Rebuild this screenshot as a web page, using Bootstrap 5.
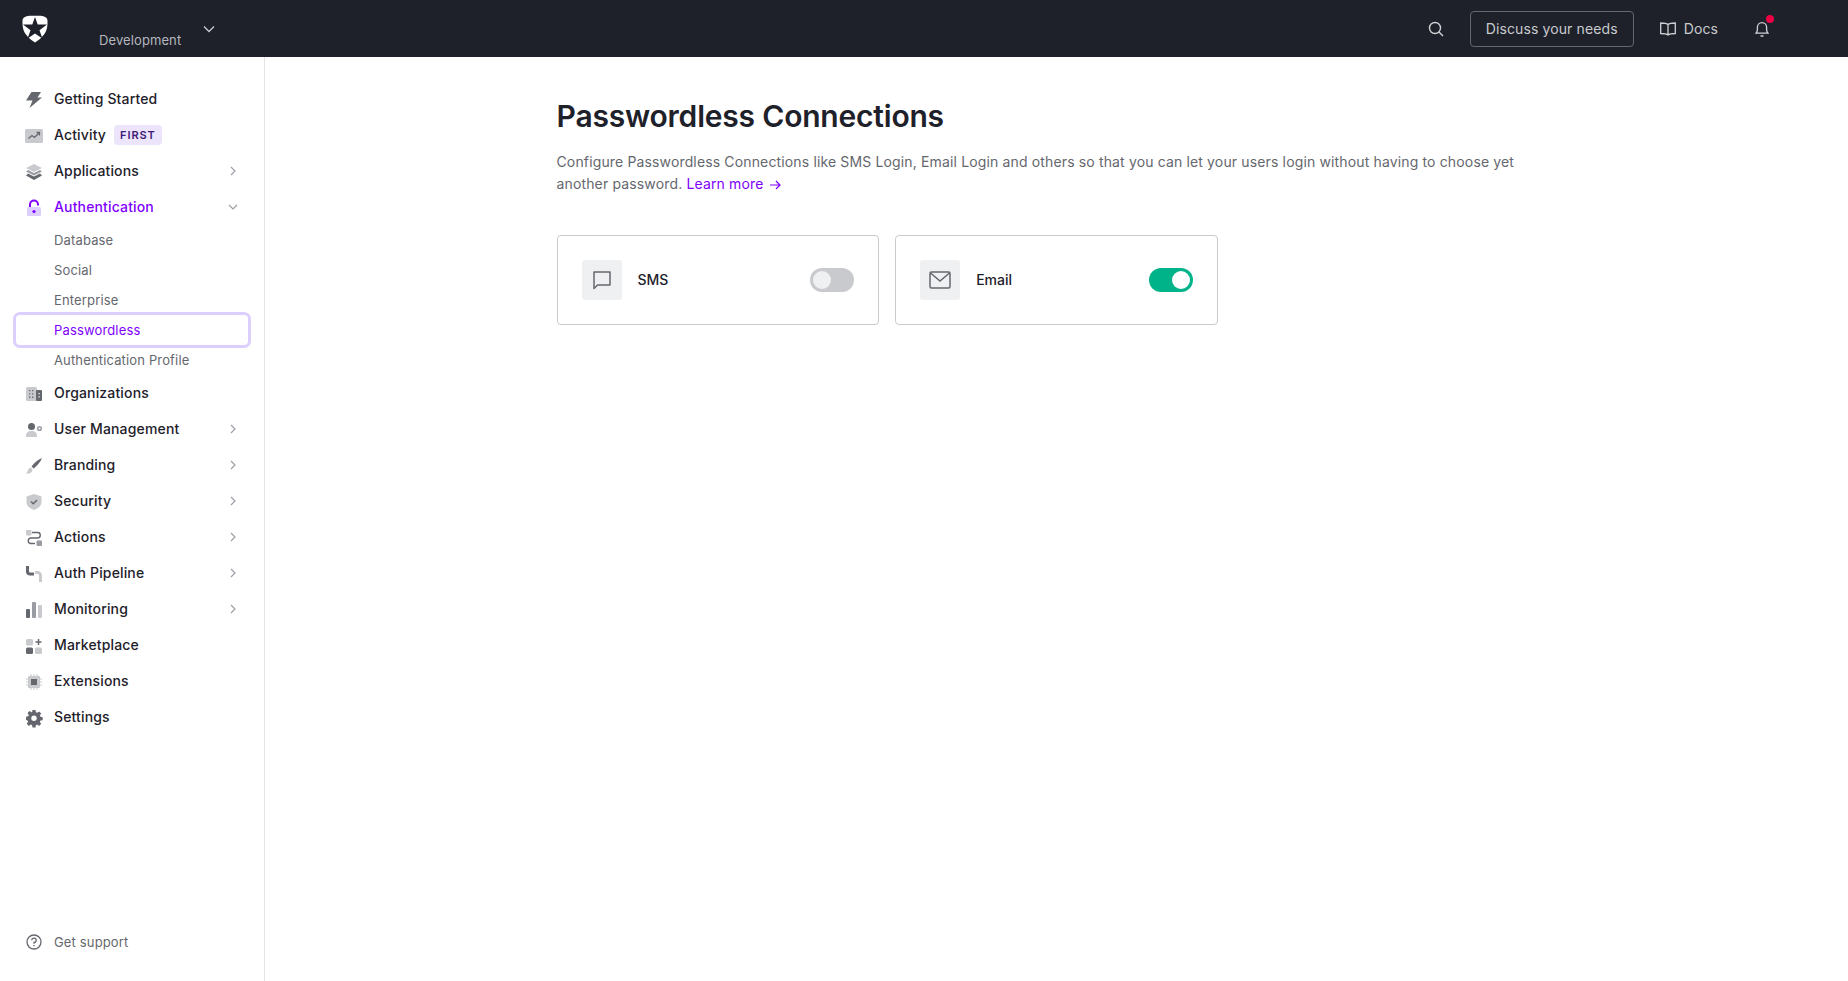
<!DOCTYPE html>
<html lang="en">
  <head>
    <meta charset="UTF-8" />
    <meta name="viewport" content="width=device-width, initial-scale=1.0" />
    <title>Passwordless Connections</title>
    <link href="https://cdn.jsdelivr.net/npm/bootstrap@5.3.3/dist/css/bootstrap.min.css" rel="stylesheet" />
    <style>
      html, body { height: 100%; }
      body {
        margin: 0;
        background: #fff;
        color: #1e212a;
        font-family: "Inter", "Liberation Sans", sans-serif;
        font-size: 14px;
        overflow: hidden;
      }
      .top-bar {
        height: 57px;
        background: #1e212a;
        padding: 0;
        color: #d0d1d5;
      }
      .brand-box { width: 265px; height: 57px; position: relative; padding-left: 22px; }
      .brand-logo { margin-top: 15px; display: block; flex: none; }
      .tenant-name { font-size: 13px; color: #b5b7be; margin: 32px 0 0 51px; line-height: 16px; letter-spacing: .1px; }
      .tenant-caret { margin: 25px 0 0 22px; }
      .top-actions { padding-right: 79px; }
      .search-link { margin-right: 26px; line-height: 0; }
      .discuss-btn {
        width: 164px;
        height: 36px;
        padding: 0;
        font-size: 14px;
        color: #c9cace;
        border: 1px solid #65676e;
        border-radius: 4px;
        letter-spacing: .12px;
      }
      .docs-link { margin-left: 26px; color: #c9cace; font-size: 14px; text-decoration: none; letter-spacing: .1px; }
      .bell-link { margin-left: 37px; position: relative; line-height: 0; }
      .bell-dot {
        position: absolute;
        top: -6px;
        right: -5px;
        width: 8px;
        height: 8px;
        border-radius: 50%;
        background: #eb0044;
      }
      .page-body { height: calc(100vh - 57px); }
      .side-nav {
        width: 265px;
        flex: none;
        border-right: 1px solid #e3e4e6;
        padding: 24px 14px 20px;
      }
      .nav-entry {
        height: 36px;
        padding: 0 14px 2px 12px;
        color: #1e212a;
        font-weight: 500;
        font-size: 14px;
        text-decoration: none;
        letter-spacing: .15px;
      }
      .nav-entry.is-open { color: #8000ff; }
      .nav-icon { width: 16px; height: 16px; margin: 3px 12px 0 0; flex: none; display: block; overflow: visible; }
      .nav-icon-wide { width: 18px; height: 16px; margin: 3px 11px 0 -1px; }
      .nav-chevron { margin: 2px 0 0 auto; flex: none; }
      .nav-chevron-down { margin-right: -2px; }
      .first-tag {
        margin: 2px 0 0 8px;
        background: #ece4fb;
        color: #3f1a78;
        font-size: 11px;
        font-weight: 600;
        letter-spacing: .9px;
        height: 20px;
        line-height: 20px;
        padding: 0 6px;
        border-radius: 4px;
      }
      .sub-entry {
        height: 30px;
        line-height: 30px;
        padding-left: 40px;
        color: #65676e;
        font-size: 13px;
        text-decoration: none;
        letter-spacing: .15px;
      }
      .sub-entry.is-current {
        color: #8000ff;
        margin: -3px -1px;
        height: 36px;
        line-height: 30px;
        padding-left: 38px;
        border: 3px solid #dccfff;
        border-radius: 7px;
        position: relative;
      }
      .support-entry { color: #65676e; font-weight: 400; font-size: 13px; margin-top: auto; padding-bottom: 0; }
      .support-entry .nav-icon { margin: 0 12px 2px 0; }
      .main-pane { flex: 1; min-width: 0; }
      .main-inner { width: 1000px; margin: 0 auto; padding-top: 37px; }
      .page-title { font-size: 30px; line-height: 44px; font-weight: 600; letter-spacing: -.2px; color: #1e212a; margin: 0 0 13px; }
      .page-intro { font-size: 14px; line-height: 22px; color: #65676e; margin: 0 0 40px; letter-spacing: .145px; }
      .page-intro a { color: #8000ff; text-decoration: none; }
      .learn-arrow { margin-left: 5px; }
      .conn-card {
        height: 90px;
        padding: 0 24px;
        border: 1px solid #c9cace;
        border-radius: 4px;
      }
      .conn-icon { width: 40px; height: 40px; background: #eff0f2; border-radius: 3px; flex: none; }
      .conn-name { margin: 0 0 1px 16px; font-weight: 500; font-size: 14px; }
      .conn-switch { margin: 0 0 0 auto; padding: 0; min-height: 0; line-height: 0; }
      .conn-switch .form-check-input {
        width: 44px;
        height: 24px;
        margin: 0;
        float: none;
        border: 0;
        background-color: #c9cace;
        background-image: url("data:image/svg+xml,%3csvg xmlns='http://www.w3.org/2000/svg' viewBox='-4 -4 8 8'%3e%3ccircle r='3' fill='%23eff0f2'/%3e%3c/svg%3e");
      }
      .conn-switch .form-check-input:checked {
        background-color: #00b388;
        background-image: url("data:image/svg+xml,%3csvg xmlns='http://www.w3.org/2000/svg' viewBox='-4 -4 8 8'%3e%3ccircle r='3' fill='%23fff'/%3e%3c/svg%3e");
      }
    </style>
  </head>
  <body>
    <nav class="navbar top-bar d-flex flex-nowrap align-items-stretch justify-content-between">
      <div class="brand-box d-flex align-items-start">
        <svg class="brand-logo" width="26" height="28" viewBox="0 0 26 28">
          <path fill="#fff" d="M18.500 .8H7.500L4.600 1.200C2.200 2 .6 3.300 .5 5.500c-.2 6.500 .8 10.500 3.500 14C6.300 22.800 9.500 25.500 13 27.500c3.500-2 6.700-4.700 9-8 2.700-3.500 3.700-7.500 3.500-14-.1-2.200-1.700-3.500-4.100-4.300Z"/>
          <path fill="#1e212a" d="M13 2l2.700 7.600H25l-7.500 5.600 2.900 8.300L13 18.500l-7.400 5 2.900-8.300L1 9.600h9.300Z"/>
        </svg>
        <div class="tenant-name">Development</div>
        <svg class="tenant-caret" width="12" height="8" viewBox="0 0 12 8"><path d="M1 1.500l5 5 5-5" fill="none" stroke="#c9cace" stroke-width="1.300"/></svg>
      </div>
      <div class="top-actions d-flex align-items-center">
        <a class="search-link" href="#">
          <svg width="16" height="16" viewBox="0 0 16 16" fill="none" stroke="#d0d1d5" stroke-width="1.400"><circle cx="7" cy="7" r="5.500"/><path d="M11 11l4 4"/></svg>
        </a>
        <button type="button" class="btn discuss-btn">Discuss your needs</button>
        <a class="docs-link d-flex align-items-center gap-2" href="#">
          <svg width="16" height="14" viewBox="0 0 16 14" fill="none" stroke="#d0d1d5" stroke-width="1.300"><path d="M8 2.500C6.500 1.200 3 1 .7 1v10.500c2.300 0 5.800.2 7.300 1.500 1.500-1.300 5-1.500 7.300-1.500V1C13 1 9.500 1.200 8 2.500ZM8 2.500V13"/></svg>
          Docs
        </a>
        <a class="bell-link" href="#">
          <svg width="14" height="16" viewBox="0 0 14 16" fill="none" stroke="#d0d1d5" stroke-width="1.300"><path d="M1 12.200c1-1 1.400-2 1.400-3.700V6.300a4.600 4.600 0 0 1 9.200 0v2.200c0 1.700.4 2.700 1.400 3.700ZM5.500 15h3"/></svg>
          <span class="bell-dot"></span>
        </a>
      </div>
    </nav>

    <div class="page-body d-flex">
      <aside class="side-nav d-flex flex-column">
        <a class="nav-entry d-flex align-items-center" href="#">
          <svg class="nav-icon" viewBox="0 0 16 16"><path fill="#65676e" d="M5.500 0H15l-3.500 5.500H16L3.500 16l3-7.500H0Z"/></svg>
          Getting Started
        </a>
        <a class="nav-entry d-flex align-items-center" href="#">
          <svg class="nav-icon nav-icon-wide" viewBox="0 0 18 16"><rect y="1" width="18" height="14" rx="1.500" fill="#c9cace"/><path d="M3.500 10.500l3.500-3 2.500 2 4.500-4.500M11.500 4.500h3v3" fill="none" stroke="#65676e" stroke-width="1.300"/></svg>
          Activity
          <span class="first-tag">FIRST</span>
        </a>
        <a class="nav-entry d-flex align-items-center" href="#">
          <svg class="nav-icon" viewBox="0 0 16 16"><path fill="#c9cace" d="M8 0l8 4-8 4-8-4Z"/><path fill="#9a9ca3" d="M8 9L2 6 0 7.500l8 4 8-4L14 6Z"/><path fill="#65676e" d="M8 12.500 2 9.500l-2 2 8 4.500 8-4.500-2-2Z"/></svg>
          Applications
          <svg class="nav-chevron" width="6" height="10" viewBox="0 0 6 10"><path d="M1 1l4 4-4 4" fill="none" stroke="#9a9ca3" stroke-width="1.100"/></svg>
        </a>
        <a class="nav-entry is-open d-flex align-items-center" href="#">
          <svg class="nav-icon" viewBox="0 0 16 16"><rect x="1" y="7" width="14" height="9" rx="1.500" fill="#dccfff"/><path d="M4 7V4.500a4 4 0 0 1 8 0V5.500" fill="none" stroke="#8000ff" stroke-width="2"/><circle cx="8" cy="11.500" r="1.600" fill="#8000ff"/></svg>
          Authentication
          <svg class="nav-chevron nav-chevron-down" width="10" height="6" viewBox="0 0 10 6"><path d="M1 1l4 4 4-4" fill="none" stroke="#9a9ca3" stroke-width="1.100"/></svg>
        </a>
        <a class="sub-entry" href="#">Database</a>
        <a class="sub-entry" href="#">Social</a>
        <a class="sub-entry" href="#">Enterprise</a>
        <a class="sub-entry is-current" href="#">Passwordless</a>
        <a class="sub-entry" href="#">Authentication Profile</a>
        <a class="nav-entry d-flex align-items-center" href="#">
          <svg class="nav-icon" viewBox="0 0 16 16"><rect y="1" width="11" height="14" rx="1.500" fill="#c9cace"/><rect x="10" y="4" width="6" height="11" rx="1" fill="#65676e"/><path d="M3 4h1.300v1.300H3ZM6 4h1.300v1.300H6ZM3 7.300h1.300v1.300H3ZM6 7.300h1.300v1.300H6ZM3 10.600h1.300v1.300H3ZM6 10.600h1.300v1.300H6Z" fill="#65676e"/><path d="M12.500 7h1.200v1.300h-1.200ZM12.500 10.300h1.200v1.300h-1.200Z" fill="#fff"/></svg>
          Organizations
        </a>
        <a class="nav-entry d-flex align-items-center" href="#">
          <svg class="nav-icon" viewBox="0 0 16 16"><circle cx="5.500" cy="4.500" r="3.500" fill="#65676e"/><path fill="#c9cace" d="M0 14c0-3.500 2-5 5.500-5s5.500 1.500 5.500 5v1H0Z"/><circle cx="13.500" cy="6.500" r="1.800" fill="none" stroke="#9a9ca3" stroke-width="1.500"/></svg>
          User Management
          <svg class="nav-chevron" width="6" height="10" viewBox="0 0 6 10"><path d="M1 1l4 4-4 4" fill="none" stroke="#9a9ca3" stroke-width="1.100"/></svg>
        </a>
        <a class="nav-entry d-flex align-items-center" href="#">
          <svg class="nav-icon" viewBox="0 0 16 16"><path fill="#65676e" d="M16 0C12 1.500 8 5 5.500 8.500l2.200 2C11 8 14.500 4 16 0Z"/><path fill="#c9cace" d="M4.500 9.500C2.500 10 2 12 1.500 13.500L0 15.500c3 .5 6-.5 6.700-4Z"/></svg>
          Branding
          <svg class="nav-chevron" width="6" height="10" viewBox="0 0 6 10"><path d="M1 1l4 4-4 4" fill="none" stroke="#9a9ca3" stroke-width="1.100"/></svg>
        </a>
        <a class="nav-entry d-flex align-items-center" href="#">
          <svg class="nav-icon" viewBox="0 0 16 16"><path fill="#c9cace" d="M8 0l7.500 2.500V8c0 3.500-3 6.500-7.500 8C3.500 14.500.5 11.500.5 8V2.500Z"/><path d="M5 7.500l2.300 2.200L11 6" fill="none" stroke="#65676e" stroke-width="1.500"/></svg>
          Security
          <svg class="nav-chevron" width="6" height="10" viewBox="0 0 6 10"><path d="M1 1l4 4-4 4" fill="none" stroke="#9a9ca3" stroke-width="1.100"/></svg>
        </a>
        <a class="nav-entry d-flex align-items-center" href="#">
          <svg class="nav-icon" viewBox="0 0 16 16"><rect y="0" width="5.500" height="5.500" rx="1" fill="#c9cace"/><rect x="10.500" y="10.500" width="5.500" height="5.500" rx="1" fill="#9a9ca3"/><path d="M6 2.500h5.500a2.700 2.700 0 0 1 0 5.500h-7a2.800 2.800 0 0 0 0 5.500H9" fill="none" stroke="#65676e" stroke-width="1.400"/></svg>
          Actions
          <svg class="nav-chevron" width="6" height="10" viewBox="0 0 6 10"><path d="M1 1l4 4-4 4" fill="none" stroke="#9a9ca3" stroke-width="1.100"/></svg>
        </a>
        <a class="nav-entry d-flex align-items-center" href="#">
          <svg class="nav-icon" viewBox="0 0 16 16"><path fill="#65676e" d="M0 0h3v5c0 1 .5 1.500 1.500 1.500H8v3H4C1.500 9.500 0 8 0 5.500Z"/><path fill="#c9cace" d="M9 5h2c3 0 5 2 5 5v6h-3v-6c0-1.500-.8-2-2-2H9Z"/></svg>
          Auth Pipeline
          <svg class="nav-chevron" width="6" height="10" viewBox="0 0 6 10"><path d="M1 1l4 4-4 4" fill="none" stroke="#9a9ca3" stroke-width="1.100"/></svg>
        </a>
        <a class="nav-entry d-flex align-items-center" href="#">
          <svg class="nav-icon" viewBox="0 0 16 16"><rect y="7" width="4" height="9" rx="1" fill="#65676e"/><rect x="6" y="0" width="4" height="16" rx="1" fill="#9a9ca3"/><rect x="12" y="3" width="4" height="13" rx="1" fill="#c9cace"/></svg>
          Monitoring
          <svg class="nav-chevron" width="6" height="10" viewBox="0 0 6 10"><path d="M1 1l4 4-4 4" fill="none" stroke="#9a9ca3" stroke-width="1.100"/></svg>
        </a>
        <a class="nav-entry d-flex align-items-center" href="#">
          <svg class="nav-icon" viewBox="0 0 16 16"><rect y="1" width="7" height="6.500" rx="1.500" fill="#c9cace"/><rect y="9.500" width="7" height="6.500" rx="1.500" fill="#65676e"/><rect x="9" y="9.500" width="7" height="6.500" rx="1.500" fill="#c9cace"/><path d="M12.500 1v6M9.500 4h6" stroke="#65676e" stroke-width="1.500"/></svg>
          Marketplace
        </a>
        <a class="nav-entry d-flex align-items-center" href="#">
          <svg class="nav-icon" viewBox="0 0 16 16"><rect x="2" y="2" width="12" height="12" rx="1" fill="#c9cace"/><rect x="5" y="5" width="6" height="6" fill="#65676e"/><path d="M5 0v2M8 0v2M11 0v2M5 14v2M8 14v2M11 14v2M0 5h2M0 8h2M0 11h2M14 5h2M14 8h2M14 11h2" stroke="#c9cace"/></svg>
          Extensions
        </a>
        <a class="nav-entry d-flex align-items-center" href="#">
          <svg class="nav-icon" viewBox="0 0 16 16"><path fill="#65676e" fill-rule="evenodd" d="M6.500 0h3l.4 2.200 1.300.6L13.100 1.500l2.100 2.100-1.300 1.900.6 1.300 2.200.4v3l-2.200.4-.6 1.300 1.300 1.900-2.100 2.100-1.900-1.300-1.300.6-.4 2.200h-3l-.4-2.200-1.300-.6-1.900 1.300L.8 13.700l1.300-1.900-.6-1.300L0 9.700v-3l2.200-.4.600-1.300L1.500 3.100 3.600 1l1.900 1.300 .6-.1ZM8 5.500a2.700 2.700 0 1 0 0 5.400 2.700 2.700 0 0 0 0-5.400Z"/></svg>
          Settings
        </a>
        <a class="nav-entry support-entry d-flex align-items-center" href="#">
          <svg class="nav-icon" viewBox="0 0 16 16" fill="none" stroke="#65676e" stroke-width="1.300"><circle cx="8" cy="8" r="7"/><path d="M5.800 6.200A2.200 2.200 0 1 1 8 8.500v1.200"/><path d="M8 11v1.300"/></svg>
          Get support
        </a>
      </aside>

      <main class="main-pane">
        <div class="main-inner">
          <h1 class="page-title">Passwordless Connections</h1>
          <p class="page-intro">
            Configure Passwordless Connections like SMS Login, Email Login and others so that you can let your users login without having to choose yet another password.
            <a href="#">Learn more<svg class="learn-arrow" width="12" height="10" viewBox="0 0 12 10" fill="none" stroke="#8000ff" stroke-width="1.200"><path d="M1 5h10M7 1l4 4-4 4"/></svg></a>
          </p>
          <div class="row g-3">
            <div class="col-4">
              <div class="card conn-card flex-row align-items-center">
                <div class="conn-icon d-flex align-items-center justify-content-center">
                  <svg width="20" height="20" viewBox="0 0 20 20" fill="none" stroke="#65676e" stroke-width="1.500"><path d="M2 2h16v13H5.500L2 18.500Z" stroke-linejoin="round"/></svg>
                </div>
                <span class="conn-name">SMS</span>
                <div class="form-check form-switch conn-switch">
                  <input class="form-check-input" type="checkbox" role="switch" aria-label="SMS" />
                </div>
              </div>
            </div>
            <div class="col-4">
              <div class="card conn-card flex-row align-items-center">
                <div class="conn-icon d-flex align-items-center justify-content-center">
                  <svg width="22" height="20" viewBox="0 0 22 20" fill="none" stroke="#65676e" stroke-width="1.500"><rect x="1" y="2" width="20" height="16" rx="1.500"/><path d="M1.500 3l9.500 8 9.500-8"/></svg>
                </div>
                <span class="conn-name">Email</span>
                <div class="form-check form-switch conn-switch">
                  <input class="form-check-input" type="checkbox" role="switch" aria-label="Email" checked />
                </div>
              </div>
            </div>
          </div>
        </div>
      </main>
    </div>
    <script src="https://cdn.jsdelivr.net/npm/bootstrap@5.3.3/dist/js/bootstrap.bundle.min.js"></script>
  </body>
</html>
